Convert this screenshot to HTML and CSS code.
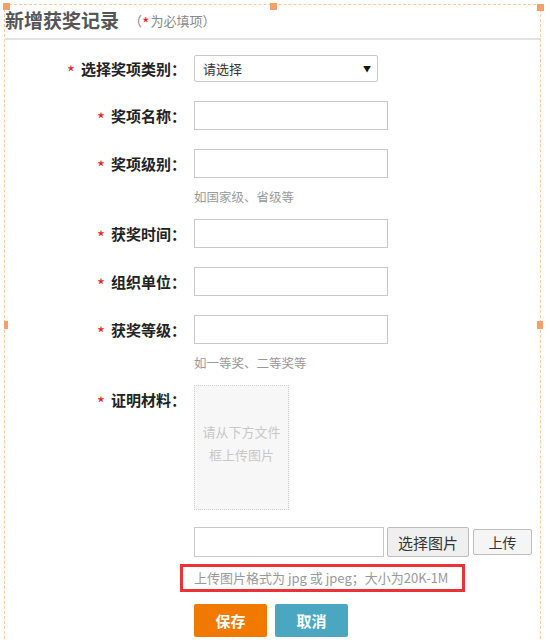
FILE: index.html
```
<!DOCTYPE html>
<html>
  <head>
    <meta charset="utf-8">
    <title>新增获奖记录</title>
    <link rel="stylesheet" href="styles.css">
  </head>
  <body>
    <div class="frame">
      <span class="handle h-tl"></span>
      <span class="handle h-tm"></span>
      <span class="handle h-tr"></span>
      <span class="handle h-ml"></span>
      <span class="handle h-mr"></span>
    </div>

    <div class="page">
      <div class="head">
        <h2 class="title">新增获奖记录</h2>
        <span class="note">（<span class="req">*</span>为必填项）</span>
      </div>

      <form class="form">
        <div class="row row-select">
          <label class="label"><span class="req">*</span>选择奖项类别：</label>
          <div class="field">
            <div class="select"><span>请选择</span><span class="arrow">▼</span></div>
          </div>
        </div>

        <div class="row">
          <label class="label"><span class="req">*</span>奖项名称：</label>
          <div class="field"><input type="text" class="text"></div>
        </div>

        <div class="row">
          <label class="label"><span class="req">*</span>奖项级别：</label>
          <div class="field">
            <input type="text" class="text">
            <p class="hint">如国家级、省级等</p>
          </div>
        </div>

        <div class="row">
          <label class="label"><span class="req">*</span>获奖时间：</label>
          <div class="field"><input type="text" class="text"></div>
        </div>

        <div class="row">
          <label class="label"><span class="req">*</span>组织单位：</label>
          <div class="field"><input type="text" class="text"></div>
        </div>

        <div class="row">
          <label class="label"><span class="req">*</span>获奖等级：</label>
          <div class="field">
            <input type="text" class="text">
            <p class="hint">如一等奖、二等奖等</p>
          </div>
        </div>

        <div class="row">
          <label class="label"><span class="req">*</span>证明材料：</label>
          <div class="field">
            <div class="preview">请从下方文件<br>框上传图片</div>
            <div class="upload">
              <input type="text" class="file">
              <button type="button" class="btn-pick">选择图片</button>
              <button type="button" class="btn-up">上传</button>
            </div>
            <div class="tip">上传图片格式为 jpg 或 jpeg；大小为20K-1M</div>
            <div class="actions">
              <button type="button" class="btn-save">保存</button>
              <button type="button" class="btn-cancel">取消</button>
            </div>
          </div>
        </div>
      </form>
    </div>
  </body>
</html>
```

FILE: styles.css
```
body{
  margin: 0;
  font-family: "Noto Sans CJK SC", "Microsoft YaHei", "Liberation Sans", sans-serif;
  background: #fff;
  color: #333;
}

/* selection overlay */
.frame{
  position: absolute;
  left: 4px;
  top: 4px;
  width: 537px;
  height: 640px;
  border: 1px dashed #fbc8a6;
  box-sizing: border-box;
  pointer-events: none;
}
.handle{
  position: absolute;
  width: 7px;
  height: 7px;
  background: #f5a068;
}
.h-tl{ left: -2px; top: -2px; }
.h-tm{ left: 265px; top: -2px; }
.h-tr{ right: -4px; top: -1px; }
.h-ml{ left: -1px; top: 316px; width: 4px; height: 8px; }
.h-mr{ right: -3px; top: 316px; height: 8px; width: 6px; }

.page{
  padding: 0 9px 0 5px;
}

.head{
  display: flex;
  align-items: center;
  height: 38px;
  border-bottom: 2px solid #e2e2e2;
}
.title{
  margin: 0 10px 0 0;
  font-size: 19px;
  font-weight: bold;
  color: #555;
  line-height: 24px;
  padding-top: 2px;
}
.note{
  font-size: 13px;
  color: #888;
  padding-top: 3px;
}
.note .req{
  font-size: 16px;
  margin-right: 1px;
}

.req{
  color: #e41e1e;
  font-weight: normal;
  font-size: 17px;
  line-height: 0;
  margin-right: 6px;
  vertical-align: -4px;
}

.form{
  margin: 15px 0 0;
}

.row{
  display: flex;
  align-items: flex-start;
  margin-bottom: 19px;
}
.row-select .label{
  height: 27px;
  line-height: 27px;
}

.label{
  width: 181px;
  height: 29px;
  margin-right: 8px;
  text-align: right;
  font-size: 15px;
  font-weight: bold;
  color: #222;
  line-height: 29px;
  flex-shrink: 0;
}

.field{
  display: flex;
  flex-direction: column;
}

.select{
  width: 184px;
  height: 27px;
  box-sizing: border-box;
  border: 1px solid #c9c9c9;
  border-radius: 2px;
  display: flex;
  align-items: center;
  justify-content: space-between;
  padding: 0 6px 0 8px;
  font-size: 13px;
  color: #333;
}
.arrow{
  font-size: 8px;
  color: #111;
}

.text{
  width: 194px;
  height: 29px;
  box-sizing: border-box;
  border: 1px solid #c9c9c9;
  margin: 0;
  padding: 0 6px;
}

.hint{
  margin: 9px 0 -7px;
  font-size: 12.5px;
  line-height: 20px;
  color: #999;
}

.preview{
  width: 95px;
  height: 125px;
  box-sizing: border-box;
  border: 1px dotted #cfcfcf;
  background: #f7f7f7;
  color: #c8c8c8;
  font-size: 13px;
  line-height: 23px;
  text-align: center;
  display: flex;
  align-items: center;
  justify-content: center;
  padding-bottom: 10px;
}

.upload{
  display: flex;
  align-items: center;
  margin-top: 17px;
}
.file{
  width: 190px;
  height: 30px;
  box-sizing: border-box;
  border: 1px solid #c9c9c9;
  margin: 0 3px 0 0;
}
.btn-pick,
.btn-up{
  font-family: inherit;
  border: 1px solid #bdbdbd;
  border-radius: 2px;
  color: #333;
  padding: 0;
}
.btn-pick{
  width: 82px;
  height: 30px;
  background: #efefef;
  font-size: 15px;
}
.btn-up{
  width: 59px;
  height: 26px;
  margin-left: 4px;
  background: #f5f5f5;
  font-size: 14px;
}

.tip{
  margin: 7px 0 0 -14px;
  width: 285px;
  height: 28px;
  box-sizing: border-box;
  border: 3px solid #ee3136;
  padding-left: 11px;
  font-size: 13px;
  line-height: 22px;
  color: #999;
}

.actions{
  display: flex;
  gap: 8px;
  margin-top: 12px;
}
.actions button{
  width: 73px;
  height: 33px;
  border: 0;
  border-radius: 2px;
  color: #fff;
  font-family: inherit;
  font-size: 15px;
  font-weight: bold;
}
.btn-save{
  background: #f27900;
}
.btn-cancel{
  background: #4ba7c1;
}
```
